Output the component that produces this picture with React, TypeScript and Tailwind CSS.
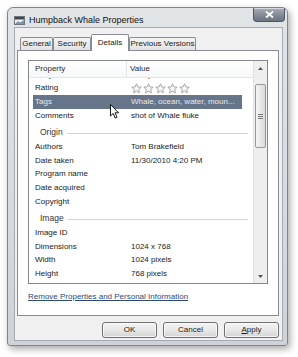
const font = "font-['Liberation_Sans',Arial,sans-serif]";

function Star() {
  return (
    <svg width="11" height="11" viewBox="0 0 11 11">
      <path
        d="M5.5 0.8 L6.9 3.9 L10.2 4.2 L7.7 6.4 L8.4 9.8 L5.5 8.1 L2.6 9.8 L3.3 6.4 L0.8 4.2 L4.1 3.9 Z"
        fill="#f6f6f6"
        stroke="#9d9d9d"
        strokeWidth="0.9"
        strokeLinejoin="round"
      />
    </svg>
  );
}

type Row = { name: string; value?: string; stars?: boolean; selected?: boolean; group?: boolean };

const rows: Row[] = [
  { name: 'Subject', value: 'Humpback Whale' },
  { name: 'Rating', stars: true },
  { name: 'Tags', value: 'Whale, ocean, water, moun...', selected: true },
  { name: 'Comments', value: 'shot of Whale fluke' },
  { name: 'Origin', group: true },
  { name: 'Authors', value: 'Tom Brakefield' },
  { name: 'Date taken', value: '11/30/2010 4:20 PM' },
  { name: 'Program name' },
  { name: 'Date acquired' },
  { name: 'Copyright' },
  { name: 'Image', group: true },
  { name: 'Image ID' },
  { name: 'Dimensions', value: '1024 x 768' },
  { name: 'Width', value: '1024 pixels' },
  { name: 'Height', value: '768 pixels' },
];

function ListRow({ row }: { row: Row }) {
  if (row.group) {
    return (
      <div className="flex h-[18px] items-start pt-[5px] ml-[4px] mr-[5px]">
        <span className="pl-[7px] pr-[4px] leading-[11px] text-[8.5px] text-[#333]">{row.name}</span>
        <div className="flex-1 mt-[6px] h-px bg-[#cdd3da]" />
      </div>
    );
  }
  return (
    <div
      className={`flex h-[13.6px] items-center ml-[4px] mr-[11px] ${
        row.selected ? 'bg-[#667589] text-[#e6eaef]' : 'text-[#1a1a1a]'
      }`}
    >
      <div className="w-[98px] pl-[2px] whitespace-nowrap">{row.name}</div>
      <div className="flex-1 whitespace-nowrap overflow-hidden">
        {row.stars ? (
          <div className="flex gap-[1px]">
            <Star />
            <Star />
            <Star />
            <Star />
            <Star />
          </div>
        ) : (
          row.value
        )}
      </div>
    </div>
  );
}

function Tab({ label, width, selected }: { label: string; width: string; selected?: boolean }) {
  if (selected) {
    return (
      <div
        className={`${width} h-[17px] -mb-px relative z-10 bg-white border border-b-0 border-[#898c95] rounded-t-[2px] flex items-start justify-center pt-[2px]`}
      >
        {label}
      </div>
    );
  }
  return (
    <div
      className={`${width} h-[13px] bg-gradient-to-b from-[#f4f4f4] to-[#e2e2e2] border border-b-0 border-[#898c95] rounded-t-[2px] flex items-center justify-center`}
    >
      {label}
    </div>
  );
}

function Button({ children }: { children: React.ReactNode }) {
  return (
    <div className="w-[55px] h-[16px] rounded-[3px] border border-[#707070] bg-gradient-to-b from-[#f3f3f3] via-[#e8e8e8] to-[#d4d4d4] flex items-center justify-center text-[#1a1a1a] shadow-[inset_0_0_0_1px_rgba(255,255,255,0.7)]">
      {children}
    </div>
  );
}

export default function App() {
  return (
    <div className={`w-[298px] h-[357px] bg-white pt-[7px] pl-[7px] relative ${font} text-[8px]`}>
      {/* Window */}
      <div className="w-[281px] h-[339px] rounded-t-[6px] rounded-b-[3px] border border-[#7d8690] bg-gradient-to-b from-[#e2e5e8] via-[#d8dce0] to-[#cfd3d8] shadow-[2px_3px_7px_rgba(0,0,0,0.35)] flex flex-col">
        {/* Title bar */}
        <div className="h-[19px] flex items-start relative">
          <svg width="11" height="9" viewBox="0 0 11 9" className="ml-[6px] mt-[8px]">
            <rect x="0.5" y="0.5" width="10" height="8" fill="#f4f4f4" stroke="#6e747b" />
            <rect x="1" y="1" width="9" height="2.5" fill="#3e4650" />
            <path d="M1 8 L4 5 L6 6.5 L10 4 L10 8 Z" fill="#7d93a8" />
          </svg>
          <span className="ml-[4px] mt-[6px] text-[9px] leading-[12px] text-[#111]">Humpback Whale Properties</span>
          <div className="ml-auto mr-[2px] w-[32px] h-[14px] rounded-b-[4px] border border-t-0 border-[#4f5760] bg-gradient-to-b from-[#a9b0b8] via-[#858d97] to-[#6c7580] flex items-center justify-center shadow-[inset_0_1px_0_rgba(255,255,255,0.5)]">
            <svg width="9" height="7" viewBox="0 0 9 7">
              <path d="M1 0.5 L8 6.5 M8 0.5 L1 6.5" stroke="#ffffff" strokeWidth="1.8" />
            </svg>
          </div>
        </div>

        {/* Client area */}
        <div className="ml-[6px] mr-[4px] mb-[4px] flex-1 bg-[#f0f0f0] border border-[#a3abb4] flex flex-col pt-[6px] pb-[2px]">
          {/* Tabs */}
          <div className="flex items-end ml-[5px] text-[#1a1a1a]">
            <Tab label="General" width="w-[33px]" />
            <Tab label="Security" width="w-[38px]" />
            <Tab label="Details" width="w-[38px]" selected />
            <Tab label="Previous Versions" width="w-[67px]" />
          </div>

          {/* Panel */}
          <div className="ml-[2px] w-[262px] h-[266px] bg-white border border-[#898c95] pt-[9px] pl-[10px] flex flex-col">
            {/* List */}
            <div className="w-[240px] h-[224px] border border-[#828790] flex overflow-hidden">
              <div className="flex-1 flex flex-col overflow-hidden">
                <div className="h-[17px] shrink-0 flex items-center bg-gradient-to-b from-white to-[#f6f7f8] border-b border-[#e4e7ea] text-[#1e2a3a]">
                  <div className="w-[98px] pl-[6px] h-full flex items-center border-r border-[#e2e5e9]">Property</div>
                  <div className="pl-[3px]">Value</div>
                </div>
                <div className="flex-1 overflow-hidden">
                  <div className="-mt-[10px]">
                    {rows.map((r) => (
                      <ListRow key={r.name} row={r} />
                    ))}
                  </div>
                </div>
              </div>
              {/* Scrollbar */}
              <div className="w-[14px] bg-[#eeeeee] border-l border-[#e3e3e3] flex flex-col">
                <div className="h-[14px] flex items-center justify-center">
                  <svg width="5" height="3" viewBox="0 0 5 3">
                    <path d="M0 3 L2.5 0 L5 3 Z" fill="#555" />
                  </svg>
                </div>
                <div className="mt-[9px] mx-[1px] h-[64px] rounded-[2px] border border-[#999] bg-gradient-to-r from-[#f4f4f4] to-[#dadada] flex flex-col items-center justify-center gap-[1px]">
                  <div className="w-[5px] h-px bg-[#777]" />
                  <div className="w-[5px] h-px bg-[#777]" />
                  <div className="w-[5px] h-px bg-[#777]" />
                </div>
                <div className="mt-auto h-[14px] flex items-center justify-center">
                  <svg width="5" height="3" viewBox="0 0 5 3">
                    <path d="M0 0 L2.5 3 L5 0 Z" fill="#555" />
                  </svg>
                </div>
              </div>
            </div>
            <div className="mt-[7px] leading-[12px] text-[#2b4a78] underline">
              Remove Properties and Personal Information
            </div>
          </div>

          {/* Buttons */}
          <div className="mt-auto flex justify-end gap-[6px] pr-[3px]">
            <Button>OK</Button>
            <Button>Cancel</Button>
            <Button>
              <span>
                <span className="underline">A</span>pply
              </span>
            </Button>
          </div>
        </div>
      </div>

      {/* Mouse pointer */}
      <svg width="10" height="15" viewBox="0 0 10 15" className="absolute left-[110px] top-[104px] z-20">
        <path
          d="M0.5 0.5 L0.5 12 L3.2 9.5 L5.2 14 L7 13.2 L5 8.8 L8.6 8.8 Z"
          fill="#ffffff"
          stroke="#000000"
          strokeWidth="0.9"
          strokeLinejoin="round"
        />
      </svg>
    </div>
  );
}
